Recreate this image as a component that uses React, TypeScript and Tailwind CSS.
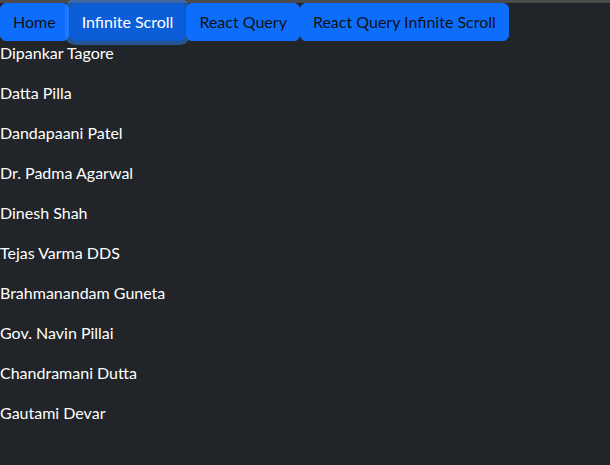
import React from "react";

const names = [
  "Dipankar Tagore",
  "Datta Pilla",
  "Dandapaani Patel",
  "Dr. Padma Agarwal",
  "Dinesh Shah",
  "Tejas Varma DDS",
  "Brahmanandam Guneta",
  "Gov. Navin Pillai",
  "Chandramani Dutta",
  "Gautami Devar",
];

const tabs = ["Home", "Infinite Scroll", "React Query", "React Query Infinite Scroll"];

export default function App() {
  return (
    <div
      className="min-h-screen bg-[#212529] border-t-[3px] border-[#4b4b4b] text-white text-[16px] leading-6"
      style={{ fontFamily: "Lato, 'Noto Sans', sans-serif" }}
    >
      <nav className="flex">
        {tabs.map((t, i) =>
          i === 1 ? (
            <button
              key={t}
              className="px-3 py-1.5 border border-[#0a58ca] rounded-md bg-[#0b5ed7] text-white shadow-[0_0_0_4px_rgba(49,132,253,0.5)]"
            >
              {t}
            </button>
          ) : (
            <button
              key={t}
              className="px-3 py-1.5 border border-[#0d6efd] rounded-md bg-[#0d6efd] text-[#111]"
            >
              {t}
            </button>
          )
        )}
      </nav>
      <div>
        {names.map((n) => (
          <p key={n} className="mb-4">
            {n}
          </p>
        ))}
      </div>
    </div>
  );
}
